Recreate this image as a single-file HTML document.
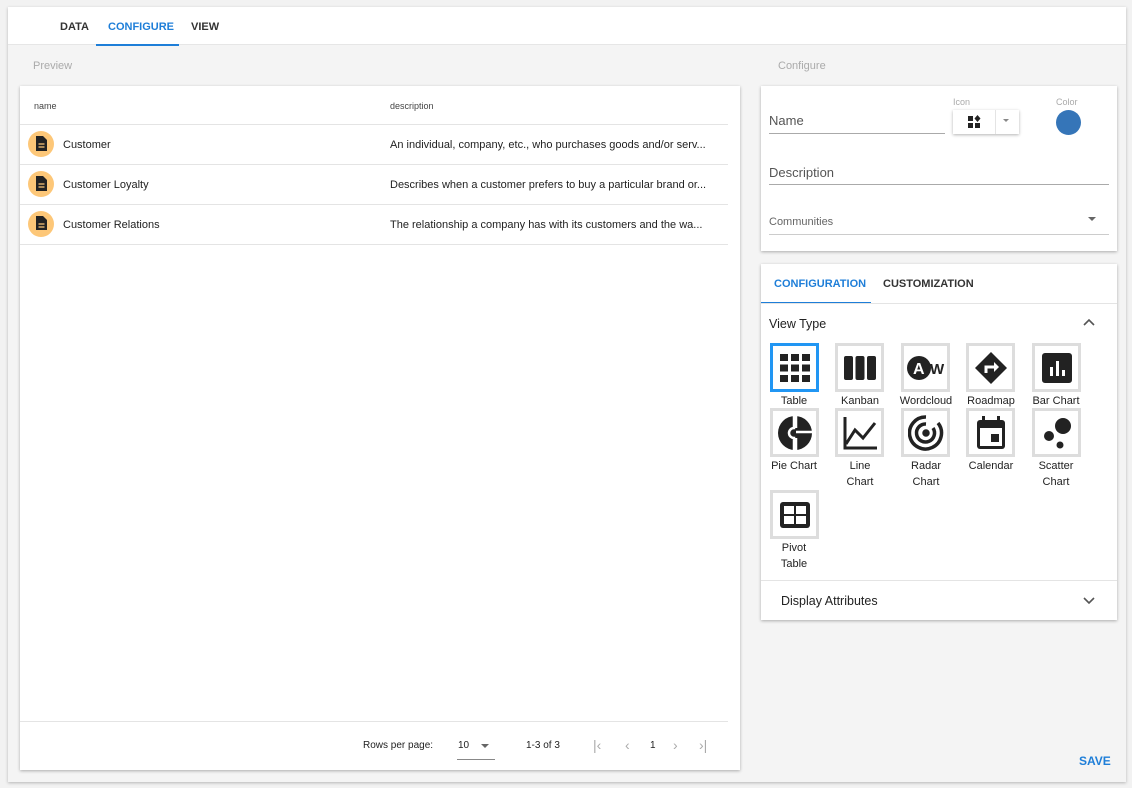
<!DOCTYPE html>
<html><head><style>
*{box-sizing:border-box;margin:0;padding:0}
body{width:1132px;height:788px;background:#f2f2f2;font-family:"Liberation Sans",sans-serif;position:relative;overflow:hidden;color:#222}
.abs{position:absolute}
.outer{left:8px;top:7px;width:1118px;height:775px;background:#f4f4f4;box-shadow:0 1px 3px rgba(0,0,0,.25)}
.hdr{left:8px;top:7px;width:1118px;height:38px;background:#fff;border-bottom:1px solid #e6e6e6}
.tab{font-size:11px;font-weight:bold;top:21px;color:#333}
.card{background:#fff;box-shadow:0 1px 3px rgba(0,0,0,.3)}
.t{font-size:11px;white-space:nowrap}
.row{left:20px;width:708px;height:40px;border-top:1px solid #e4e4e4}
.av{width:26px;height:26px;border-radius:50%;background:#fdc778;left:8px;top:6px}
.tile{width:49px;height:49px;border:3px solid #ddd;background:#fff;display:flex;align-items:center;justify-content:center}
.lbl{font-size:11px;text-align:center;width:66px;line-height:16px;color:#222}
.line{height:1px;background:#aaa}
</style></head><body>
<div class="abs outer"></div>
<div class="abs hdr"></div>
<div class="abs tab" style="left:60px">DATA</div>
<div class="abs tab" style="left:108px;color:#1e7ed8">CONFIGURE</div>
<div class="abs" style="left:96px;top:44px;width:83px;height:2px;background:#1e7ed8"></div>
<div class="abs tab" style="left:191px">VIEW</div>
<div class="abs t" style="left:33px;top:60px;color:#aaa">Preview</div>
<div class="abs t" style="left:778px;top:60px;color:#aaa">Configure</div>

<div class="abs card" style="left:20px;top:86px;width:720px;height:684px"></div>
<div class="abs t" style="left:34px;top:101px;font-size:9px;color:#444">name</div>
<div class="abs t" style="left:390px;top:101px;font-size:9px;color:#444">description</div>
<div class="abs row" style="top:124px"><div class="abs av"></div><div class="abs t" style="left:43px;top:14px">Customer</div><div class="abs t" style="left:370px;top:14px">An individual, company, etc., who purchases goods and/or serv...</div></div>
<div class="abs row" style="top:164px"><div class="abs av"></div><div class="abs t" style="left:43px;top:14px">Customer Loyalty</div><div class="abs t" style="left:370px;top:14px">Describes when a customer prefers to buy a particular brand or...</div></div>
<div class="abs row" style="top:204px"><div class="abs av"></div><div class="abs t" style="left:43px;top:14px">Customer Relations</div><div class="abs t" style="left:370px;top:14px">The relationship a company has with its customers and the wa...</div></div>
<div class="abs" style="left:20px;top:244px;width:708px;height:1px;background:#e4e4e4"></div>
<svg class="abs" style="left:28px;top:130px" width="26" height="100">
<g fill="#222"><path d="M8 6h7l4 4v11H8z"/><path d="M8 46h7l4 4v11H8z"/><path d="M8 86h7l4 4v11H8z"/></g>
<g stroke="#fdc778" stroke-width="1.2"><path d="M10.5 14h6M10.5 17h6M10.5 54h6M10.5 57h6M10.5 94h6M10.5 97h6"/></g></svg>

<div class="abs" style="left:20px;top:721px;width:708px;height:1px;background:#e4e4e4"></div>
<div class="abs t" style="left:363px;top:740px;font-size:10px">Rows per page:</div>
<div class="abs t" style="left:458px;top:740px;font-size:10px">10</div>
<div class="abs" style="left:481px;top:744px;border:4px solid transparent;border-top:4px solid #666"></div>
<div class="abs" style="left:457px;top:759px;width:38px;height:1px;background:#888"></div>
<div class="abs t" style="left:526px;top:740px;font-size:10px">1-3 of 3</div>
<div class="abs t" style="left:593px;top:737px;font-size:14px;color:#aaa">|‹</div>
<div class="abs t" style="left:625px;top:737px;font-size:14px;color:#aaa">‹</div>
<div class="abs t" style="left:650px;top:740px;font-size:10px">1</div>
<div class="abs t" style="left:673px;top:737px;font-size:14px;color:#aaa">›</div>
<div class="abs t" style="left:699px;top:737px;font-size:14px;color:#aaa">›|</div>

<div class="abs card" style="left:761px;top:86px;width:356px;height:165px"></div>
<div class="abs t" style="left:769px;top:113px;font-size:13px;color:#555">Name</div>
<div class="abs line" style="left:769px;top:133px;width:176px"></div>
<div class="abs t" style="left:953px;top:97px;font-size:9px;color:#aaa">Icon</div>
<div class="abs card" style="left:953px;top:110px;width:66px;height:24px"></div>
<div class="abs" style="left:995px;top:110px;width:1px;height:24px;background:#e4e4e4"></div>
<svg class="abs" style="left:967px;top:115px" width="14" height="14"><path fill="#222" d="M1 1h5v5H1zM1 8h5v5H1zM8 8h5v5H8zM10.5 0l3 3.5-3 3.5-3-3.5z"/></svg>
<div class="abs" style="left:1003px;top:119px;border:3.5px solid transparent;border-top:3.5px solid #888"></div>
<div class="abs t" style="left:1056px;top:97px;font-size:9px;color:#aaa">Color</div>
<div class="abs" style="left:1056px;top:110px;width:25px;height:25px;border-radius:50%;background:#3575b8"></div>
<div class="abs t" style="left:769px;top:165px;font-size:13px;color:#555">Description</div>
<div class="abs line" style="left:769px;top:184px;width:340px"></div>
<div class="abs t" style="left:769px;top:216px;font-size:11px;color:#666">Communities</div>
<div class="abs" style="left:1088px;top:217px;border:4px solid transparent;border-top:4px solid #666"></div>
<div class="abs line" style="left:769px;top:234px;width:340px;background:#ccc"></div>

<div class="abs card" style="left:761px;top:264px;width:356px;height:356px"></div>
<div class="abs tab" style="left:774px;top:278px;color:#1e7ed8">CONFIGURATION</div>
<div class="abs tab" style="left:883px;top:278px">CUSTOMIZATION</div>
<div class="abs" style="left:761px;top:302px;width:110px;height:2px;background:#1e7ed8"></div>
<div class="abs" style="left:761px;top:303px;width:356px;height:1px;background:#e4e4e4"></div>
<div class="abs t" style="left:769px;top:317px;font-size:12.5px">View Type</div>
<svg class="abs" style="left:1083px;top:318px" width="12" height="10"><path d="M1 7l5-5 5 5" stroke="#555" stroke-width="1.6" fill="none"/></svg>

<div class="abs tile" style="left:770px;top:343px;border-color:#2196f3"><svg width="32" height="30" fill="#222"><rect x="1" y="1" width="8" height="7"/><rect x="12" y="1" width="8" height="7"/><rect x="23" y="1" width="8" height="7"/><rect x="1" y="11.5" width="8" height="7"/><rect x="12" y="11.5" width="8" height="7"/><rect x="23" y="11.5" width="8" height="7"/><rect x="1" y="22" width="8" height="7"/><rect x="12" y="22" width="8" height="7"/><rect x="23" y="22" width="8" height="7"/></svg></div>
<div class="abs tile" style="left:835px;top:343px"><svg width="34" height="28" fill="#222"><rect x="1" y="2" width="9" height="24" rx="2"/><rect x="12.5" y="2" width="9" height="24" rx="2"/><rect x="24" y="2" width="9" height="24" rx="2"/></svg></div>
<div class="abs tile" style="left:901px;top:343px"><svg width="40" height="30"><circle cx="13" cy="15" r="12" fill="#222"/><text x="7" y="21" font-size="16" font-weight="bold" fill="#fff" font-family="Liberation Sans">A</text><text x="24" y="21" font-size="15" font-weight="bold" fill="#222" font-family="Liberation Sans">W</text></svg></div>
<div class="abs tile" style="left:966px;top:343px"><svg width="34" height="34"><path d="M17 1L33 17 17 33 1 17z" fill="#222"/><path d="M12 22v-6h9" stroke="#fff" stroke-width="3" fill="none"/><path d="M20 11l5 5-5 5z" fill="#fff"/></svg></div>
<div class="abs tile" style="left:1032px;top:343px"><svg width="32" height="32"><rect x="1" y="1" width="30" height="30" rx="3" fill="#222"/><rect x="9" y="15" width="3" height="9" fill="#fff"/><rect x="15" y="9" width="3" height="15" fill="#fff"/><rect x="21" y="18" width="3" height="6" fill="#fff"/></svg></div>
<div class="abs lbl" style="left:761px;top:393px">Table</div>
<div class="abs lbl" style="left:827px;top:393px">Kanban</div>
<div class="abs lbl" style="left:893px;top:393px">Wordcloud</div>
<div class="abs lbl" style="left:958px;top:393px">Roadmap</div>
<div class="abs lbl" style="left:1023px;top:393px">Bar Chart</div>

<div class="abs tile" style="left:770px;top:408px"><svg width="36" height="36"><circle cx="18" cy="18" r="17" fill="#222"/><path d="M17 0v13a5 5 0 0 0 0 10v13M19 0v13M19 23v13M19 17h17" stroke="#fff" stroke-width="2.5" fill="none"/></svg></div>
<div class="abs tile" style="left:835px;top:408px"><svg width="36" height="34" fill="none" stroke="#222" stroke-width="3"><path d="M3 1v31h32"/><path d="M4 28l9-14 8 8 12-15"/></svg></div>
<div class="abs tile" style="left:901px;top:408px"><svg width="36" height="36" fill="none" stroke="#222" stroke-width="3.5"><path d="M18 2a16 16 0 1 0 12 6"/><path d="M18 9a9 9 0 1 0 7 4"/><circle cx="18" cy="18" r="2" fill="#222"/><path d="M18 18l0-3"/></svg></div>
<div class="abs tile" style="left:966px;top:408px"><svg width="34" height="36"><rect x="3" y="5" width="28" height="29" rx="3" fill="#222"/><rect x="6" y="13" width="22" height="18" fill="#fff"/><rect x="8" y="1" width="3" height="6" fill="#222"/><rect x="23" y="1" width="3" height="6" fill="#222"/><rect x="17" y="19" width="8" height="8" fill="#222"/></svg></div>
<div class="abs tile" style="left:1032px;top:408px"><svg width="34" height="34" fill="#222"><circle cx="23" cy="10" r="8"/><circle cx="9" cy="20" r="5"/><circle cx="20" cy="29" r="3.5"/></svg></div>
<div class="abs lbl" style="left:761px;top:458px">Pie Chart</div>
<div class="abs lbl" style="left:827px;top:458px">Line<br>Chart</div>
<div class="abs lbl" style="left:893px;top:458px">Radar<br>Chart</div>
<div class="abs lbl" style="left:958px;top:458px">Calendar</div>
<div class="abs lbl" style="left:1023px;top:458px">Scatter<br>Chart</div>

<div class="abs tile" style="left:770px;top:490px"><svg width="32" height="28"><rect x="1" y="1" width="30" height="26" rx="3" fill="#222"/><rect x="5" y="5" width="10" height="8" fill="#fff"/><rect x="17" y="5" width="10" height="8" fill="#fff"/><rect x="5" y="15" width="10" height="8" fill="#fff"/><rect x="17" y="15" width="10" height="8" fill="#fff"/></svg></div>
<div class="abs lbl" style="left:761px;top:540px">Pivot<br>Table</div>

<div class="abs" style="left:761px;top:580px;width:356px;height:1px;background:#e4e4e4"></div>
<div class="abs t" style="left:781px;top:594px;font-size:12.5px">Display Attributes</div>
<svg class="abs" style="left:1083px;top:596px" width="12" height="10"><path d="M1 2l5 5 5-5" stroke="#555" stroke-width="1.6" fill="none"/></svg>

<div class="abs t" style="left:1079px;top:754px;font-size:12px;font-weight:bold;color:#1e7ed8">SAVE</div>
</body></html>
